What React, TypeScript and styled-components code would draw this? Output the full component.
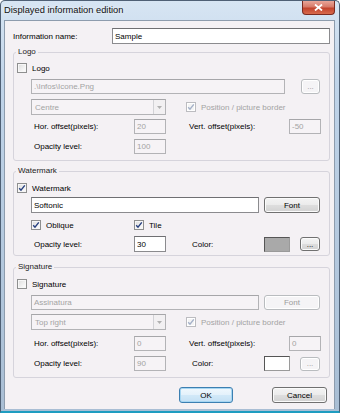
import React from 'react'
import styled, { createGlobalStyle } from 'styled-components'

const GlobalStyle = createGlobalStyle`
  html, body {
    margin: 0;
    padding: 0;
    background: #ffffff;
  }

  body {
    font-family: 'Liberation Sans', Arial, sans-serif;
    font-size: 8px;
    color: #000;
  }
`

const Window = styled.div`
  box-sizing: border-box;
  width: 340px;
  height: 413px;
  display: flex;
  flex-direction: column;
  border: 1px solid #4f6075;
  border-bottom: 2px solid #1e9cc0;
  border-radius: 5px 5px 0 0;
  background: linear-gradient(180deg, #d7e5f3 0%, #c0d4e9 20%, #a9bed4 100%);
`

const TitleBar = styled.div`
  height: 19px;
  display: flex;
  align-items: flex-start;
  flex-shrink: 0;
`

const TitleText = styled.span`
  flex: 1;
  padding: 4px 0 0 3px;
  font-size: 9.3px;
  color: #101010;
  text-shadow: 0 0 4px #ffffff;
`

const CloseButton = styled.div`
  box-sizing: border-box;
  width: 33px;
  height: 14px;
  margin-right: 4px;
  display: flex;
  align-items: center;
  justify-content: center;
  border: 1px solid #7a2a20;
  border-top: none;
  border-radius: 0 0 4px 4px;
  background: linear-gradient(180deg, #e9a699 0%, #d77a69 45%, #c2432d 55%, #d86a4c 100%);
`

const Client = styled.div`
  flex: 1;
  margin: 0 4px 2px 3px;
  display: flex;
  flex-direction: column;
  background: #f4f1f4;
  border: 1px solid #8d9cad;
  border-bottom: none;
`

const Row = styled.div<{ $mt: number; $h: number; $pl?: number }>`
  display: flex;
  align-items: center;
  height: ${(p) => p.$h}px;
  margin-top: ${(p) => p.$mt}px;
  padding-left: ${(p) => p.$pl ?? 0}px;
  flex-shrink: 0;
`

const Label = styled.span<{ $w?: number; $ml?: number; $disabled?: boolean }>`
  flex-shrink: 0;
  width: ${(p) => (p.$w ? `${p.$w}px` : 'auto')};
  margin-left: ${(p) => p.$ml ?? 0}px;
  color: ${(p) => (p.$disabled ? '#a3a3a3' : '#000')};
  white-space: nowrap;
`

const Field = styled.div<{ $w: number; $ml?: number; $disabled?: boolean }>`
  box-sizing: border-box;
  flex-shrink: 0;
  align-self: stretch;
  width: ${(p) => p.$w}px;
  margin-left: ${(p) => p.$ml ?? 0}px;
  padding-left: 2px;
  display: flex;
  align-items: center;
  border: 1px solid ${(p) => (p.$disabled ? '#b3b3b6' : '#8b8b8e')};
  border-top-color: ${(p) => (p.$disabled ? '#a6a6a9' : '#6f6f72')};
  background: ${(p) => (p.$disabled ? '#f6f3f6' : '#ffffff')};
  color: ${(p) => (p.$disabled ? '#a3a3a3' : '#000')};
  white-space: nowrap;
  overflow: hidden;
`

const Combo = styled(Field)`
  padding-left: 3px;
  justify-content: space-between;
`

const ComboArrow = styled.span`
  box-sizing: border-box;
  width: 12px;
  height: 100%;
  display: flex;
  align-items: center;
  justify-content: center;
  border-left: 1px solid #d2d2d6;
  background: #f2f0f2;
`

const Group = styled.fieldset<{ $mt: number; $pb: number }>`
  box-sizing: border-box;
  width: 317px;
  min-width: 0;
  margin: ${(p) => p.$mt}px 0 0 8px;
  padding: 0 0 ${(p) => p.$pb}px 0;
  border: 1px solid #d6d4dc;
  border-radius: 3px;
  flex-shrink: 0;
`

const Legend = styled.legend`
  margin-left: 2px;
  padding: 0 2px;
  line-height: 10px;
  color: #1c1c1c;
`

const Box = styled.span<{ $disabled?: boolean }>`
  box-sizing: border-box;
  flex-shrink: 0;
  width: 10px;
  height: 10px;
  display: flex;
  align-items: center;
  justify-content: center;
  border: 1px solid ${(p) => (p.$disabled ? '#bcbcc0' : '#8e8f8f')};
  background: ${(p) =>
    p.$disabled ? '#f4f4f4' : 'linear-gradient(135deg, #dcdcdc 0%, #f2f2f2 60%, #ffffff 100%)'};
  box-shadow: inset 0 0 0 1px ${(p) => (p.$disabled ? '#ffffff' : '#f7f7f7')};
`

const CheckCell = styled.div<{ $w?: number; $ml?: number }>`
  flex-shrink: 0;
  display: flex;
  align-items: center;
  gap: 5px;
  width: ${(p) => (p.$w ? `${p.$w}px` : 'auto')};
  margin-left: ${(p) => p.$ml ?? 0}px;
`

const PushButton = styled.button<{ $w: number; $h?: number; $ml?: number; $default?: boolean }>`
  box-sizing: border-box;
  flex-shrink: 0;
  width: ${(p) => p.$w}px;
  height: ${(p) => (p.$h ? `${p.$h}px` : '100%')};
  margin-left: ${(p) => p.$ml ?? 0}px;
  padding: 0;
  font: inherit;
  color: #000;
  border: 1px solid ${(p) => (p.$default ? '#3c7fb1' : '#707070')};
  border-radius: 3px;
  background: ${(p) =>
    p.$default
      ? 'linear-gradient(180deg, #f0f8fd 0%, #e3f1fb 50%, #d2e9f8 50%, #c4e0f4 100%)'
      : 'linear-gradient(180deg, #f4f4f4 0%, #ebebeb 50%, #dedede 50%, #d2d2d2 100%)'};
  box-shadow: inset 0 0 0 1px ${(p) => (p.$default ? '#a6d6f2' : '#fbfbfb')};

  &:disabled {
    color: #9b9b9b;
    border-color: #b9bcbf;
    background: #f5f4f6;
    box-shadow: inset 0 0 0 1px #ffffff;
  }
`

const Swatch = styled.span<{ $color: string; $ml?: number }>`
  box-sizing: border-box;
  flex-shrink: 0;
  width: 26px;
  height: 15px;
  margin-left: ${(p) => p.$ml ?? 0}px;
  background: ${(p) => p.$color};
  border: 1px solid #9a9a9a;
  border-top-color: #555;
  border-left-color: #555;
`

const ButtonBar = styled.div`
  display: flex;
  justify-content: flex-end;
  gap: 39px;
  height: 16px;
  margin-top: 9px;
  padding-right: 7px;
`

function CheckBox({ checked, disabled }: { checked?: boolean; disabled?: boolean }) {
  return (
    <Box $disabled={disabled}>
      {checked && (
        <svg width="8" height="8" viewBox="0 0 8 8">
          <path
            d="M1.2 4.2 L3 6.2 L6.8 1.4"
            fill="none"
            stroke={disabled ? '#a4b0c8' : '#27407f'}
            strokeWidth="1.4"
          />
        </svg>
      )}
    </Box>
  )
}

function DownArrow() {
  return (
    <ComboArrow>
      <svg width="5" height="3" viewBox="0 0 5 3">
        <path d="M0 0 H5 L2.5 3 Z" fill="#b0b0b0" />
      </svg>
    </ComboArrow>
  )
}

export default function App() {
  return (
    <>
      <GlobalStyle />
      <Window>
        <TitleBar>
          <TitleText>Displayed information edition</TitleText>
          <CloseButton>
            <svg width="9" height="7" viewBox="0 0 9 7">
              <path d="M1 0.5 L8 6.5 M8 0.5 L1 6.5" stroke="#ffffff" strokeWidth="1.8" />
            </svg>
          </CloseButton>
        </TitleBar>

        <Client>
          <Row $mt={7} $h={16} $pl={8}>
            <Label $w={99}>Information name:</Label>
            <Field $w={218}>Sample</Field>
          </Row>

          {/* Logo */}
          <Group $mt={3} $pb={6}>
            <Legend>Logo</Legend>
            <Row $mt={5} $h={12} $pl={3}>
              <CheckCell>
                <CheckBox />
                <Label>Logo</Label>
              </CheckCell>
            </Row>
            <Row $mt={5} $h={15} $pl={17}>
              <Field $w={254} $disabled>
                .\Infos\Icone.Png
              </Field>
              <PushButton $w={19} $ml={16} disabled>
                ...
              </PushButton>
            </Row>
            <Row $mt={5} $h={16} $pl={17}>
              <Combo $w={135} $disabled>
                Centre
                <DownArrow />
              </Combo>
              <CheckCell $ml={20}>
                <CheckBox checked disabled />
                <Label $disabled>Position / picture border</Label>
              </CheckCell>
            </Row>
            <Row $mt={4} $h={15} $pl={20}>
              <Label $w={100}>Hor. offset(pixels):</Label>
              <Field $w={32} $disabled>
                20
              </Field>
              <Label $w={100} $ml={23}>
                Vert. offset(pixels):
              </Label>
              <Field $w={32} $disabled>
                -50
              </Field>
            </Row>
            <Row $mt={5} $h={15} $pl={20}>
              <Label $w={100}>Opacity level:</Label>
              <Field $w={32} $disabled>
                100
              </Field>
            </Row>
          </Group>

          {/* Watermark */}
          <Group $mt={5} $pb={3}>
            <Legend>Watermark</Legend>
            <Row $mt={6} $h={12} $pl={3}>
              <CheckCell>
                <CheckBox checked />
                <Label>Watermark</Label>
              </CheckCell>
            </Row>
            <Row $mt={3} $h={16} $pl={17}>
              <Field $w={228}>Softonic</Field>
              <PushButton $w={56} $ml={5}>
                Font
              </PushButton>
            </Row>
            <Row $mt={6} $h={12} $pl={17}>
              <CheckCell $w={103}>
                <CheckBox checked />
                <Label>Oblique</Label>
              </CheckCell>
              <CheckCell>
                <CheckBox checked />
                <Label>Tile</Label>
              </CheckCell>
            </Row>
            <Row $mt={5} $h={16} $pl={20}>
              <Label $w={100}>Opacity level:</Label>
              <Field $w={32}>30</Field>
              <Label $w={72} $ml={26}>
                Color:
              </Label>
              <Swatch $color="#a9a9a9" />
              <PushButton $w={20} $h={14} $ml={10}>
                ...
              </PushButton>
            </Row>
          </Group>

          {/* Signature */}
          <Group $mt={6} $pb={6}>
            <Legend>Signature</Legend>
            <Row $mt={6} $h={12} $pl={3}>
              <CheckCell>
                <CheckBox />
                <Label>Signature</Label>
              </CheckCell>
            </Row>
            <Row $mt={5} $h={15} $pl={17}>
              <Field $w={228} $disabled>
                Assinatura
              </Field>
              <PushButton $w={56} $ml={5} disabled>
                Font
              </PushButton>
            </Row>
            <Row $mt={4} $h={16} $pl={17}>
              <Combo $w={135} $disabled>
                Top right
                <DownArrow />
              </Combo>
              <CheckCell $ml={20}>
                <CheckBox checked disabled />
                <Label $disabled>Position / picture border</Label>
              </CheckCell>
            </Row>
            <Row $mt={6} $h={15} $pl={20}>
              <Label $w={100}>Hor. offset(pixels):</Label>
              <Field $w={32} $disabled>
                0
              </Field>
              <Label $w={100} $ml={23}>
                Vert. offset(pixels):
              </Label>
              <Field $w={32} $disabled>
                0
              </Field>
            </Row>
            <Row $mt={5} $h={15} $pl={20}>
              <Label $w={100}>Opacity level:</Label>
              <Field $w={32} $disabled>
                90
              </Field>
              <Label $w={72} $ml={26}>
                Color:
              </Label>
              <Swatch $color="#ffffff" />
              <PushButton $w={20} $h={14} $ml={10} disabled>
                ...
              </PushButton>
            </Row>
          </Group>

          <ButtonBar>
            <PushButton $w={54} $default>
              OK
            </PushButton>
            <PushButton $w={55}>Cancel</PushButton>
          </ButtonBar>
        </Client>
      </Window>
    </>
  )
}
